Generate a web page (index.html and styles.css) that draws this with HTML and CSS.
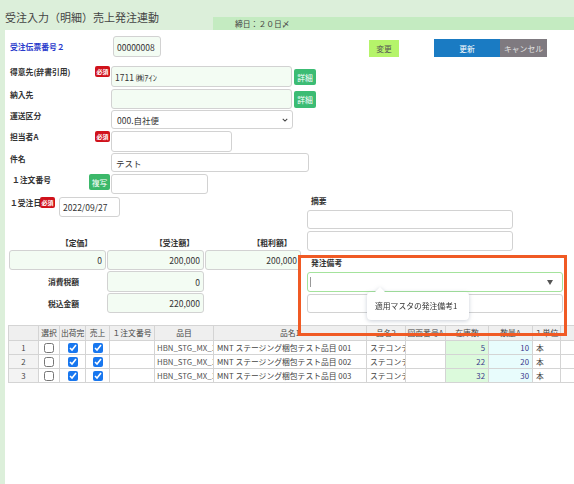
FILE: index.html
```html
<!DOCTYPE html>
<html lang="ja">
	<head>
		<meta charset="UTF-8" />
		<meta name="viewport" content="width=device-width, initial-scale=1.0" />
		<title>受注入力（明細）売上発注連動</title>
		<link rel="stylesheet" href="styles.css">
	</head>
	<body>
		<header class="titlebar">
			<h1 class="title">受注入力（明細）売上発注連動</h1>
			<div class="closing">締日：２０日〆</div>
		</header>

		<main class="panel">
			<!-- 伝票番号 / ボタン -->
			<div class="row row-top">
				<label class="label label-no">受注伝票番号２</label>
				<input class="field field-tint field-no" value="00000008" />
				<button class="btn btn-change">変更</button>
				<button class="btn btn-update">更新</button>
				<button class="btn btn-cancel">キャンセル</button>
			</div>

			<div class="row row-customer">
				<label class="label">得意先(辞書引用)</label>
				<span class="mark"><span class="badge">必須</span></span>
				<input class="field field-tint field-customer" value="1711 ㈱ｱｲﾝ" />
				<button class="btn btn-detail">詳細</button>
			</div>

			<div class="row row-delivery">
				<label class="label">納入先</label>
				<span class="mark"></span>
				<input class="field field-tint field-delivery" value="" />
				<button class="btn btn-detail btn-detail2">詳細</button>
			</div>

			<div class="row row-ship">
				<label class="label">運送区分</label>
				<span class="mark"></span>
				<div class="field select field-ship">
					<span>000.自社便</span>
					<svg class="chevron" viewBox="0 0 8 5" width="6" height="4">
						<path d="M1 1 L4 4 L7 1" fill="none" stroke="#444" stroke-width="1.4" />
					</svg>
				</div>
			</div>

			<div class="row row-staff">
				<label class="label">担当者A</label>
				<span class="mark"><span class="badge">必須</span></span>
				<input class="field field-staff" value="" />
			</div>

			<div class="row row-subject">
				<label class="label">件名</label>
				<span class="mark"></span>
				<input class="field field-subject" value="テスト" />
			</div>

			<div class="row row-order">
				<label class="label label-order">１注文番号</label>
				<button class="btn btn-copy">複写</button>
				<input class="field field-order" value="" />
			</div>

			<div class="lower">
				<div class="lower-left">
					<div class="row row-date">
						<label class="label label-date">１受注日</label>
						<span class="badge">必須</span>
						<input class="field field-date" value="2022/09/27" />
					</div>

					<div class="amounts">
						<span class="amount-head">【定価】</span>
						<span class="amount-head">【受注額】</span>
						<span class="amount-head">【粗利額】</span>
						<input class="field field-tint field-num" value="0" />
						<input class="field field-tint field-num" value="200,000" />
						<input class="field field-tint field-num" value="200,000" />
						<span class="amount-label">消費税額</span>
						<input class="field field-tint field-num" value="0" />
						<span></span>
						<span class="amount-label">税込金額</span>
						<input class="field field-tint field-num" value="220,000" />
					</div>
				</div>

				<div class="lower-right">
					<label class="label label-side">摘要</label>
					<input class="field field-memo field-memo1" value="" />
					<input class="field field-memo field-memo2" value="" />

					<div class="bikou">
						<label class="label label-side label-bikou">発注備考</label>
						<div class="field combo">
							<span class="caret"></span>
							<svg class="combo-arrow" viewBox="0 0 6 5" width="6" height="5">
								<path d="M0 0 L6 0 L3 5 Z" fill="#555" />
							</svg>
						</div>
						<input class="field field-bikou2" value="" />
						<div class="tooltip">適用マスタの発注備考1</div>
					</div>
				</div>
			</div>

			<!-- 明細 -->
			<div class="detail-wrap">
				<table class="detail">
					<colgroup>
						<col style="width: 30px" />
						<col style="width: 21px" />
						<col style="width: 26px" />
						<col style="width: 24px" />
						<col style="width: 45px" />
						<col style="width: 59px" />
						<col style="width: 153px" />
						<col style="width: 39px" />
						<col style="width: 40px" />
						<col style="width: 43px" />
						<col style="width: 44px" />
						<col style="width: 28px" />
						<col style="width: 50px" />
					</colgroup>
					<thead>
						<tr>
							<th></th>
							<th>選択</th>
							<th>出荷完</th>
							<th>売上</th>
							<th>１注文番号</th>
							<th>品目</th>
							<th>品名1</th>
							<th>品名2</th>
							<th>図面番号A</th>
							<th>在庫数</th>
							<th>数量A</th>
							<th>１単位</th>
							<th></th>
						</tr>
					</thead>
					<tbody>
						<tr>
							<td class="no">1</td>
							<td class="chk"><input type="checkbox" /></td>
							<td class="chk"><input type="checkbox" checked /></td>
							<td class="chk"><input type="checkbox" checked /></td>
							<td></td>
							<td class="code">HBN_STG_MX_1</td>
							<td>MNT ステージング梱包テスト品目 001</td>
							<td>ステコンテナ</td>
							<td></td>
							<td class="qty stock">5</td>
							<td class="qty amount">10</td>
							<td>本</td>
							<td></td>
						</tr>
						<tr>
							<td class="no">2</td>
							<td class="chk"><input type="checkbox" /></td>
							<td class="chk"><input type="checkbox" checked /></td>
							<td class="chk"><input type="checkbox" checked /></td>
							<td></td>
							<td class="code">HBN_STG_MX_1</td>
							<td>MNT ステージング梱包テスト品目 002</td>
							<td>ステコンテナ</td>
							<td></td>
							<td class="qty stock">22</td>
							<td class="qty amount">20</td>
							<td>本</td>
							<td></td>
						</tr>
						<tr>
							<td class="no">3</td>
							<td class="chk"><input type="checkbox" /></td>
							<td class="chk"><input type="checkbox" checked /></td>
							<td class="chk"><input type="checkbox" checked /></td>
							<td></td>
							<td class="code">HBN_STG_MX_1</td>
							<td>MNT ステージング梱包テスト品目 003</td>
							<td>ステコンテナ</td>
							<td></td>
							<td class="qty stock">32</td>
							<td class="qty amount">30</td>
							<td>本</td>
							<td></td>
						</tr>
					</tbody>
				</table>
			</div>

			<!-- 注目枠 -->
			<div class="highlight"></div>
		</main>
	</body>
</html>
```

FILE: styles.css
```css
* {
	box-sizing: border-box;
}

body {
	margin: 0;
	height: 484px;
	overflow: hidden;
	background: #dcefda;
	font-family: "Noto Sans CJK JP", "Noto Sans", sans-serif;
	font-size: 7.8px;
	color: #333;
}

/*TITRE*/
.titlebar {
	display: flex;
	height: 30px;
}

.title {
	margin: 0;
	width: 213px;
	padding: 10px 0 0 5px;
	font-size: 11px;
	line-height: 15px;
	font-weight: normal;
	color: #444;
	white-space: nowrap;
}

.closing {
	flex: 1;
	align-self: flex-end;
	height: 13px;
	padding-left: 22px;
	background: #c4ebc1;
	line-height: 13px;
	font-size: 7.8px;
	color: #444;
}

/*PANNEAU*/
.panel {
	position: relative;
	margin-left: 5px;
	height: 454px;
	padding: 6px 0 0 5px;
	background: #fff;
	overflow: hidden;
}

.row {
	display: flex;
	align-items: flex-start;
}

.label {
	width: 85px;
	flex-shrink: 0;
	line-height: 12px;
	font-weight: bold;
	color: #333;
	white-space: nowrap;
}

.mark {
	width: 16px;
	flex-shrink: 0;
}

.badge {
	display: block;
	width: 15px;
	height: 11px;
	border-radius: 2px;
	background: #d0121b;
	color: #fff;
	font-size: 6px;
	line-height: 11px;
	text-align: center;
	font-weight: bold;
}

.field {
	display: block;
	flex-shrink: 0;
	margin: 0;
	padding: 0 3px;
	border: 1px solid #d2d2d2;
	border-radius: 3px;
	background: #fff;
	font-family: inherit;
	font-size: 8.5px;
	color: #333;
	outline: none;
}

.field-tint {
	background: #f3fcf3;
}

.btn {
	flex-shrink: 0;
	margin: 0;
	padding: 0;
	border: none;
	font-family: inherit;
	font-size: 7.8px;
	cursor: pointer;
}

/* ligne 1 */
.row-top {
	height: 21px;
}

.label-no {
	width: 103px;
	line-height: 21px;
	color: #2b3ccc;
}

.field-no {
	width: 48px;
	height: 21px;
}

.btn-change {
	width: 30px;
	height: 17px;
	margin: 4px 0 0 208px;
	background: #b5f46a;
	color: #555;
}

.btn-update {
	width: 66px;
	height: 18px;
	margin: 3px 0 0 35px;
	background: #1a7bc3;
	color: #fff;
}

.btn-cancel {
	width: 47px;
	height: 18px;
	margin-top: 3px;
	background: #7f7a80;
	color: #e4e4e4;
}

.row-customer {
	margin-top: 9px;
}

.field-customer {
	width: 181px;
	height: 21px;
}

.btn-detail {
	width: 22px;
	height: 16px;
	margin: 3px 0 0 2px;
	border-radius: 2px;
	background: #3cbc74;
	color: #fff;
}

.row-delivery {
	margin-top: 2px;
}

.field-delivery {
	width: 181px;
	height: 20px;
}

.btn-detail2 {
	height: 17px;
	margin-top: 2px;
}

.row-ship {
	margin-top: 1px;
}

.select {
	display: flex;
	align-items: center;
	justify-content: space-between;
	padding: 0 5px;
}

.field-ship {
	width: 182px;
	height: 19px;
}

.chevron {
	margin-right: -1px;
}

.row-staff {
	margin-top: 2px;
}

.field-staff {
	width: 121px;
	height: 21px;
}

.row-subject {
	margin-top: 1px;
}

.field-subject {
	width: 198px;
	height: 19px;
	padding-left: 4px;
}

.row-order {
	margin-top: 2px;
}

.label-order {
	width: 79px;
	padding-left: 2px;
}

.btn-copy {
	width: 21px;
	height: 16px;
	margin-right: 1px;
	border-radius: 2px;
	background: #3cb86a;
	color: #fff;
}

.field-order {
	width: 97px;
	height: 20px;
}

/*BAS DU FORMULAIRE*/
.lower {
	display: flex;
	margin-top: 3px;
}

.lower-left {
	width: 297px;
	flex-shrink: 0;
}

.label-date {
	width: 30px;
}

.field-date {
	width: 61px;
	height: 20px;
	margin-left: 4px;
}

.amounts {
	display: grid;
	grid-template-columns: 97px 97px 96px;
	grid-template-rows: 12px 20px 21px 20px;
	column-gap: 1px;
	row-gap: 1px;
	margin: 20px 0 0 -1px;
}

.amount-head {
	padding-left: 38px;
	text-align: center;
	line-height: 12px;
	font-weight: bold;
	color: #333;
}

.amount-label {
	padding-left: 12px;
	text-align: center;
	line-height: 21px;
	font-weight: bold;
}

.field-num {
	width: 100%;
	height: 100%;
	text-align: right;
}

.lower-right {
	flex: 1;
	display: flex;
	flex-direction: column;
	align-items: flex-start;
}

.label-side {
	width: auto;
	margin-top: -2px;
	padding-left: 4px;
}

.field-memo {
	width: 206px;
}

.field-memo1 {
	height: 19px;
	margin-top: 3px;
}

.field-memo2 {
	height: 20px;
	margin-top: 2px;
}

.bikou {
	position: relative;
	display: flex;
	flex-direction: column;
	align-items: flex-start;
}

.label-bikou {
	margin-top: 6px;
}

.combo {
	display: flex;
	align-items: center;
	justify-content: space-between;
	width: 256px;
	height: 20px;
	margin-top: 3px;
	padding: 0 9px 0 2px;
	border-color: #a4e39c;
}

.caret {
	width: 1px;
	height: 10px;
	background: #999;
}

.field-bikou2 {
	width: 256px;
	height: 19px;
	margin-top: 2px;
}

/* Bulle d'aide */
.tooltip {
	position: absolute;
	left: 60px;
	top: 41px;
	width: 102px;
	height: 28px;
	padding-left: 8px;
	border-radius: 4px;
	background: #fff;
	filter: drop-shadow(0 1px 2px rgba(60, 80, 110, 0.28));
	line-height: 28px;
	font-size: 7.8px;
	color: #333;
	white-space: nowrap;
	z-index: 2;
}

.tooltip::before {
	content: "";
	position: absolute;
	left: 8px;
	top: -5px;
	border-left: 5px solid transparent;
	border-right: 5px solid transparent;
	border-bottom: 5px solid #fff;
}

/*TABLEAU*/
.detail-wrap {
	margin: 12px 0 0 -2px;
	width: 620px;
}

.detail {
	table-layout: fixed;
	width: 602px;
	border-collapse: collapse;
	font-size: 7.8px;
	color: #444;
}

.detail th,
.detail td {
	border: 1px solid #d4d4d4;
	padding: 0 3px;
	overflow: hidden;
	white-space: nowrap;
	line-height: 12px;
}

.detail th {
	height: 15px;
	padding: 0 1px;
	background: #efefef;
	font-weight: normal;
	text-align: center;
}

.detail td {
	height: 14px;
}

.detail td.no {
	background: #f3f3f3;
	text-align: center;
}

.detail td.chk {
	padding: 0;
	text-align: center;
}

.detail input[type="checkbox"] {
	width: 10px;
	height: 10px;
	margin: 0;
	vertical-align: middle;
	accent-color: #1877ef;
}

.detail td.code {
	padding: 0 2px;
	color: #555;
	text-overflow: clip;
}

.detail td.qty {
	text-align: right;
	color: #36368a;
}

.detail td.stock {
	background: #dcfadc;
}

.detail td.amount {
	background: #e8fcfc;
}

/* Cadre de mise en évidence */
.highlight {
	position: absolute;
	left: 293px;
	top: 225px;
	width: 269px;
	height: 81px;
	border: 3px solid #f05a24;
	pointer-events: none;
	z-index: 3;
}
```
